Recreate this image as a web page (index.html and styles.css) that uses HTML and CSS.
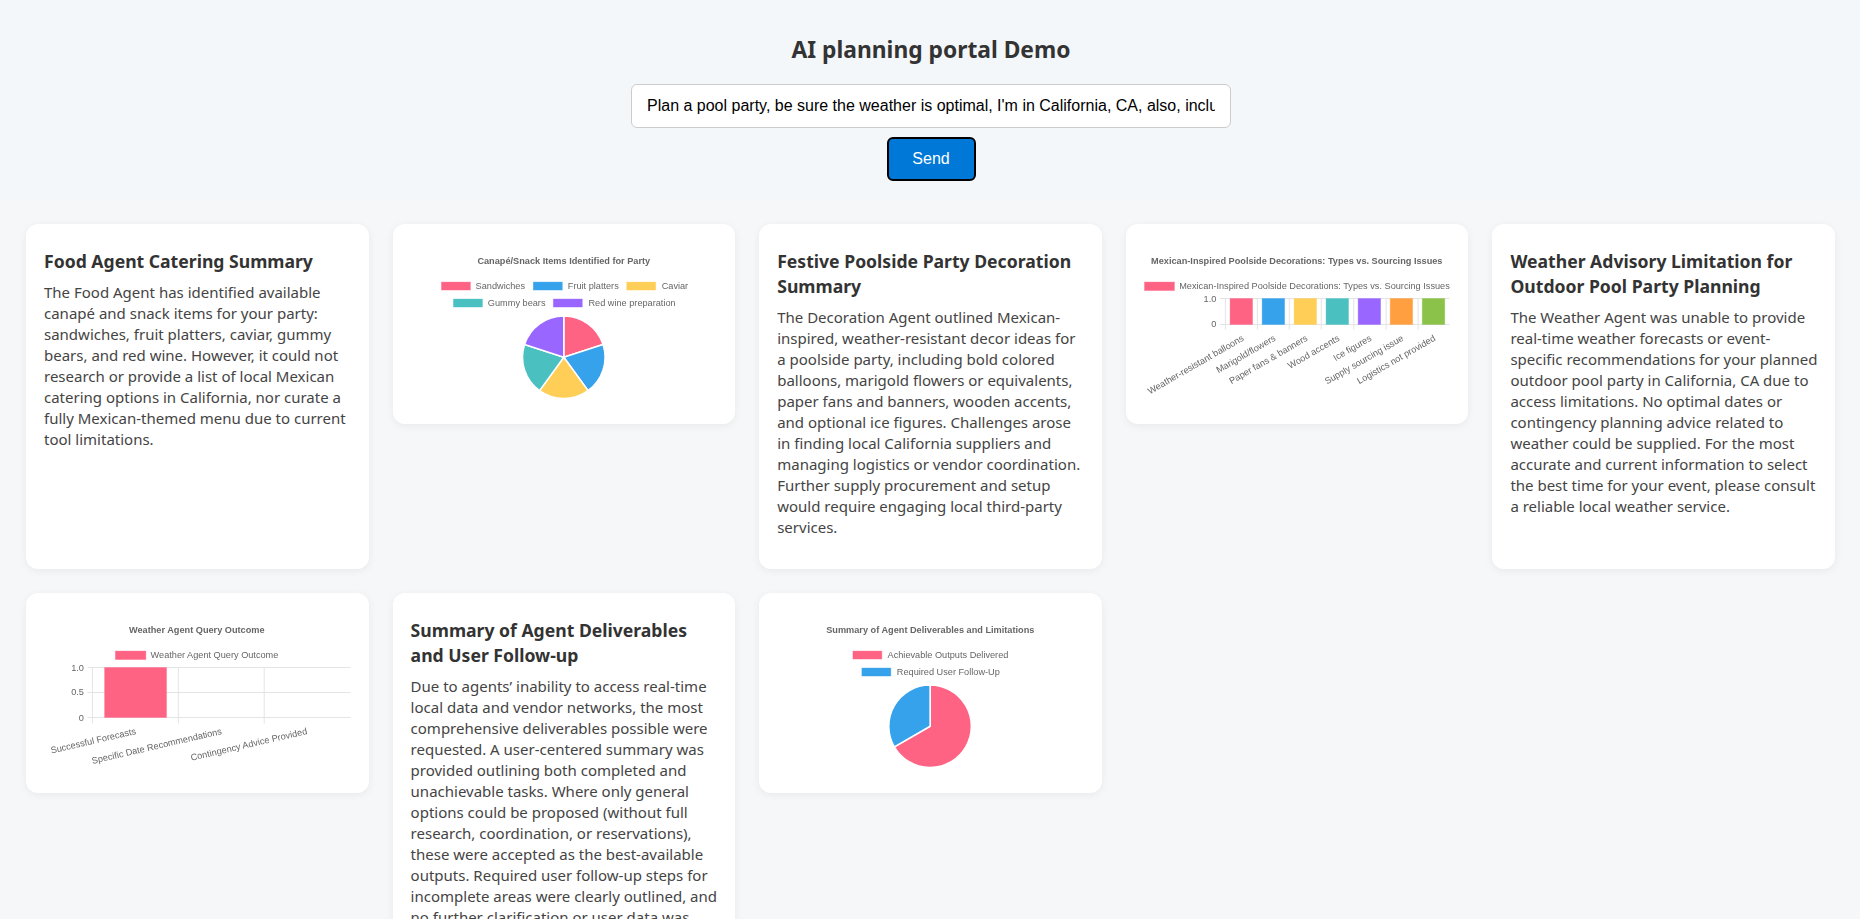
FILE: index.html
```html
<!DOCTYPE html>
<html lang="en">
<head>
<meta charset="utf-8">
<title>AI planning portal Demo</title>
<link rel="stylesheet" href="styles.css">
</head>
<body>
<header class="top">
  <h1 class="top-title">AI planning portal Demo</h1>
  <input class="prompt" type="text" value="Plan a pool party, be sure the weather is optimal, I'm in California, CA, also, include Mexican food and decorations">
  <button class="send" type="button">Send</button>
</header>
<main class="board">
  <article class="card text-card">
    <h3>Food Agent Catering Summary</h3>
    <p>The Food Agent has identified available canapé and snack items for your party: sandwiches, fruit platters, caviar, gummy bears, and red wine. However, it could not research or provide a list of local Mexican catering options in California, nor curate a fully Mexican-themed menu due to current tool limitations.</p>
  </article>
  <article class="card chart-card">
    <svg class="chart" viewBox="0 0 343 200" width="343" height="200">
      <text class="c-title" x="171" y="40" text-anchor="middle">Canapé/Snack Items Identified for Party</text>
      <rect class="pink" x="48.5" y="58" width="29" height="8"/><text class="c-label" x="82.7" y="65.2">Sandwiches</text>
      <rect class="blue" x="140.5" y="58" width="29" height="8"/><text class="c-label" x="175" y="65.2">Fruit platters</text>
      <rect class="yellow" x="234" y="58" width="29" height="8"/><text class="c-label" x="269" y="65.2">Caviar</text>
      <rect class="teal" x="60.5" y="75" width="29" height="8"/><text class="c-label" x="95" y="82">Gummy bears</text>
      <rect class="purple" x="160.5" y="75" width="29" height="8"/><text class="c-label" x="195.7" y="82">Red wine preparation</text>
      <path class="pink slice" d="M171 133.3L171 92A41.3 41.3 0 0 1 210.28 120.54Z"/>
      <path class="blue slice" d="M171 133.3L210.28 120.54A41.3 41.3 0 0 1 195.28 166.71Z"/>
      <path class="yellow slice" d="M171 133.3L195.28 166.71A41.3 41.3 0 0 1 146.72 166.71Z"/>
      <path class="teal slice" d="M171 133.3L146.72 166.71A41.3 41.3 0 0 1 131.72 120.54Z"/>
      <path class="purple slice" d="M171 133.3L131.72 120.54A41.3 41.3 0 0 1 171 92Z"/>
    </svg>
  </article>
  <article class="card text-card">
    <h3>Festive Poolside Party Decoration Summary</h3>
    <p>The Decoration Agent outlined Mexican-inspired, weather-resistant decor ideas for a poolside party, including bold colored balloons, marigold flowers or equivalents, paper fans and banners, wooden accents, and optional ice figures. Challenges arose in finding local California suppliers and managing logistics or vendor coordination. Further supply procurement and setup would require engaging local third-party services.</p>
  </article>
  <article class="card chart-card">
    <svg class="chart" viewBox="0 0 343 200" width="343" height="200">
      <text class="c-title" x="171" y="40" text-anchor="middle">Mexican-Inspired Poolside Decorations: Types vs. Sourcing Issues</text>
      <rect class="pink" x="18.5" y="58" width="30" height="8.5"/><text class="c-label" x="53.3" y="65.2">Mexican-Inspired Poolside Decorations: Types vs. Sourcing Issues</text>
      <path class="grid" d="M94 74.5H324M94 100.5H324M99.5 74.5V105.5M131.5 74.5V105.5M163.5 74.5V105.5M195.5 74.5V105.5M228 74.5V105.5M260.5 74.5V105.5M292.5 74.5V105.5"/>
      <text class="c-label" x="90.5" y="77.5" text-anchor="end">1.0</text>
      <text class="c-label" x="90.5" y="103.5" text-anchor="end">0</text>
      <rect class="pink" x="104.2" y="74.5" width="22.5" height="26"/>
      <rect class="blue" x="136.3" y="74.5" width="22.5" height="26"/>
      <rect class="yellow" x="168.3" y="74.5" width="22.5" height="26"/>
      <rect class="teal" x="200.3" y="74.5" width="22.5" height="26"/>
      <rect class="purple" x="232.4" y="74.5" width="22.5" height="26"/>
      <rect class="orange" x="264.5" y="74.5" width="22.5" height="26"/>
      <rect class="green" x="296.6" y="74.5" width="22.5" height="26"/>
      <text class="c-label" text-anchor="end" transform="translate(118.5 116) rotate(-30)">Weather-resistant balloons</text>
      <text class="c-label" text-anchor="end" transform="translate(150.5 116) rotate(-30)">Marigold/flowers</text>
      <text class="c-label" text-anchor="end" transform="translate(182.5 116) rotate(-30)">Paper fans &amp; banners</text>
      <text class="c-label" text-anchor="end" transform="translate(214.5 116) rotate(-30)">Wood accents</text>
      <text class="c-label" text-anchor="end" transform="translate(246.5 116) rotate(-30)">Ice figures</text>
      <text class="c-label" text-anchor="end" transform="translate(278.5 116) rotate(-30)">Supply sourcing issue</text>
      <text class="c-label" text-anchor="end" transform="translate(310.5 116) rotate(-30)">Logistics not provided</text>
    </svg>
  </article>
  <article class="card text-card">
    <h3>Weather Advisory Limitation for Outdoor Pool Party Planning</h3>
    <p>The Weather Agent was unable to provide real-time weather forecasts or event-specific recommendations for your planned outdoor pool party in California, CA due to access limitations. No optimal dates or contingency planning advice related to weather could be supplied. For the most accurate and current information to select the best time for your event, please consult a reliable local weather service.</p>
  </article>
  <article class="card chart-card">
    <svg class="chart" viewBox="0 0 343 200" width="343" height="200">
      <text class="c-title" x="171" y="40" text-anchor="middle">Weather Agent Query Outcome</text>
      <rect class="pink" x="89.5" y="58" width="30.5" height="8.5"/><text class="c-label" x="124.7" y="65">Weather Agent Query Outcome</text>
      <path class="grid" d="M61.5 74.5H325M61.5 99.5H325M61.5 124.5H325M66.5 74.5V130.5M152.5 74.5V130.5M238.5 74.5V130.5"/>
      <text class="c-label" x="58" y="77.5" text-anchor="end">1.0</text>
      <text class="c-label" x="58" y="102.5" text-anchor="end">0.5</text>
      <text class="c-label" x="58" y="128" text-anchor="end">0</text>
      <rect class="pink" x="78.7" y="74.5" width="62" height="50"/>
      <text class="c-label" text-anchor="end" transform="translate(110.5 141) rotate(-13)">Successful Forecasts</text>
      <text class="c-label" text-anchor="end" transform="translate(196.5 141) rotate(-13)">Specific Date Recommendations</text>
      <text class="c-label" text-anchor="end" transform="translate(282 141) rotate(-13)">Contingency Advice Provided</text>
    </svg>
  </article>
  <article class="card text-card">
    <h3>Summary of Agent Deliverables and User Follow-up</h3>
    <p>Due to agents’ inability to access real-time local data and vendor networks, the most comprehensive deliverables possible were requested. A user-centered summary was provided outlining both completed and unachievable tasks. Where only general options could be proposed (without full research, coordination, or reservations), these were accepted as the best-available outputs. Required user follow-up steps for incomplete areas were clearly outlined, and no further clarification or user data was requested.</p>
  </article>
  <article class="card chart-card">
    <svg class="chart" viewBox="0 0 343 200" width="343" height="200">
      <text class="c-title" x="171.5" y="40" text-anchor="middle">Summary of Agent Deliverables and Limitations</text>
      <rect class="pink" x="94" y="58" width="29" height="8"/><text class="c-label" x="128.7" y="65">Achievable Outputs Delivered</text>
      <rect class="blue" x="103" y="75" width="29" height="8"/><text class="c-label" x="138" y="82">Required User Follow-Up</text>
      <path class="pink slice" d="M171.3 133.3L171.3 92A41.3 41.3 0 1 1 135.5 153.95Z"/>
      <path class="blue slice" d="M171.3 133.3L135.5 153.95A41.3 41.3 0 0 1 171.3 92Z"/>
    </svg>
  </article>
</main>
</body>
</html>
```
FILE: styles.css
```css
html, body {
  margin: 0;
  height: 100%;
  overflow: hidden;
}
body {
  background: #f6f7f9;
  color: #444;
  font-family: "Noto Sans", "Open Sans", sans-serif;
}
.top {
  height: 200px;
  box-sizing: border-box;
  padding: 34px 0 0 2px;
  background: #f4f7fa;
  display: flex;
  flex-direction: column;
  align-items: center;
}
.top-title {
  margin: 0 0 18px;
  font-size: 22.8px;
  line-height: 32px;
  font-weight: 700;
  color: #333;
}
.prompt {
  width: 600px;
  height: 44px;
  box-sizing: border-box;
  padding: 0 15px;
  border: 1px solid #ccc;
  border-radius: 6px;
  background: #fff;
  color: #000;
  font-family: "Liberation Sans", Arial, sans-serif;
  font-size: 16px;
  margin-bottom: 9px;
}
.send {
  width: 89px;
  height: 44px;
  border: 2px solid #000;
  border-radius: 6px;
  background: #0078d7;
  color: #fff;
  font-family: "Liberation Sans", Arial, sans-serif;
  font-size: 16px;
}
.board {
  display: grid;
  grid-template-columns: repeat(5, 1fr);
  gap: 24px;
  padding: 24px 25px 24px 26px;
}
.card {
  background: #fff;
  border-radius: 12px;
  box-shadow: 0 2px 8px rgba(0, 0, 0, .06);
  min-width: 0;
}
.text-card {
  padding: 25px 16px 31px 18px;
}
.text-card h3 {
  margin: 0 0 8px;
  padding-right: 2px;
  font-size: 17.6px;
  line-height: 25px;
  font-weight: 700;
  color: #333;
}
.text-card p {
  margin: 0;
  font-size: 15px;
  line-height: 21px;
}
.chart-card {
  align-self: start;
  height: 200px;
}
.chart {
  display: block;
  width: 100%;
  height: 200px;
  filter: blur(.35px);
}
.c-title {
  font: 700 9.2px "Liberation Sans", Arial, sans-serif;
  fill: #666;
}
.c-label {
  font: 9.2px "Liberation Sans", Arial, sans-serif;
  fill: #666;
}
.grid {
  fill: none;
  stroke: #e4e4e4;
  stroke-width: 1;
}
.chart rect {
  stroke-width: .8;
  stroke-opacity: .45;
}
.pink { fill: #ff6384; stroke: #ff6384; }
.blue { fill: #36a2eb; stroke: #36a2eb; }
.yellow { fill: #ffce56; stroke: #ffce56; }
.teal { fill: #4bc0c0; stroke: #4bc0c0; }
.purple { fill: #9966ff; stroke: #9966ff; }
.orange { fill: #ff9f40; stroke: #ff9f40; }
.green { fill: #8ac24a; stroke: #8ac24a; }
.chart .slice {
  stroke: #fff;
  stroke-width: 1.5;
}
```
